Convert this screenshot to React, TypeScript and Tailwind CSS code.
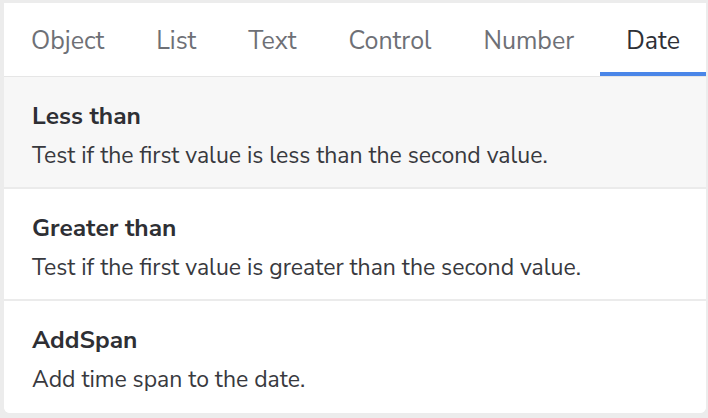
import React from "react";

const tabs = ["Object", "List", "Text", "Control", "Number", "Date"];
const rows = [
  { t: "Less than", d: "Test if the first value is less than the second value.", hl: true },
  { t: "Greater than", d: "Test if the first value is greater than the second value.", hl: false },
  { t: "AddSpan", d: "Add time span to the date.", hl: false },
];

export default function App() {
  return (
    <div
      className="w-[708px] h-[418px] bg-[#ececec] pl-[4px] pr-[2px] pt-[3px] pb-[5px]"
      style={{ fontFamily: '"Nunito Sans", "Open Sans", sans-serif' }}
    >
      <div className="w-full h-full bg-white rounded-b-[6px] overflow-hidden flex flex-col">
        <div className="flex h-[74px] pl-[1px] border-b border-[#e6e6e6]">
          {tabs.map((t) => {
            const active = t === "Date";
            return (
              <div
                key={t}
                className={
                  "relative px-[26px] flex items-center pt-[4px] text-[25px] " +
                  (active ? "text-[#2e3036]" : "text-[#6e7076]")
                }
              >
                {t}
                {active && <div className="absolute left-0 right-0 bottom-0 h-[4px] bg-[#4a86e8]" />}
              </div>
            );
          })}
        </div>
        {rows.map((r, i) => (
          <div
            key={r.t}
            className={
              "h-[112px] px-[28px] pt-[23px] " +
              (r.hl ? "bg-[#f7f7f7] " : "bg-white ") +
              (i < rows.length - 1 ? "border-b-2 border-[#ebebeb]" : "")
            }
          >
            <div className="text-[24.5px] font-bold text-[#2e2f34] leading-[32px]">{r.t}</div>
            <div className="text-[23px] text-[#38393e] leading-[30px] mt-[9px]">{r.d}</div>
          </div>
        ))}
      </div>
    </div>
  );
}
